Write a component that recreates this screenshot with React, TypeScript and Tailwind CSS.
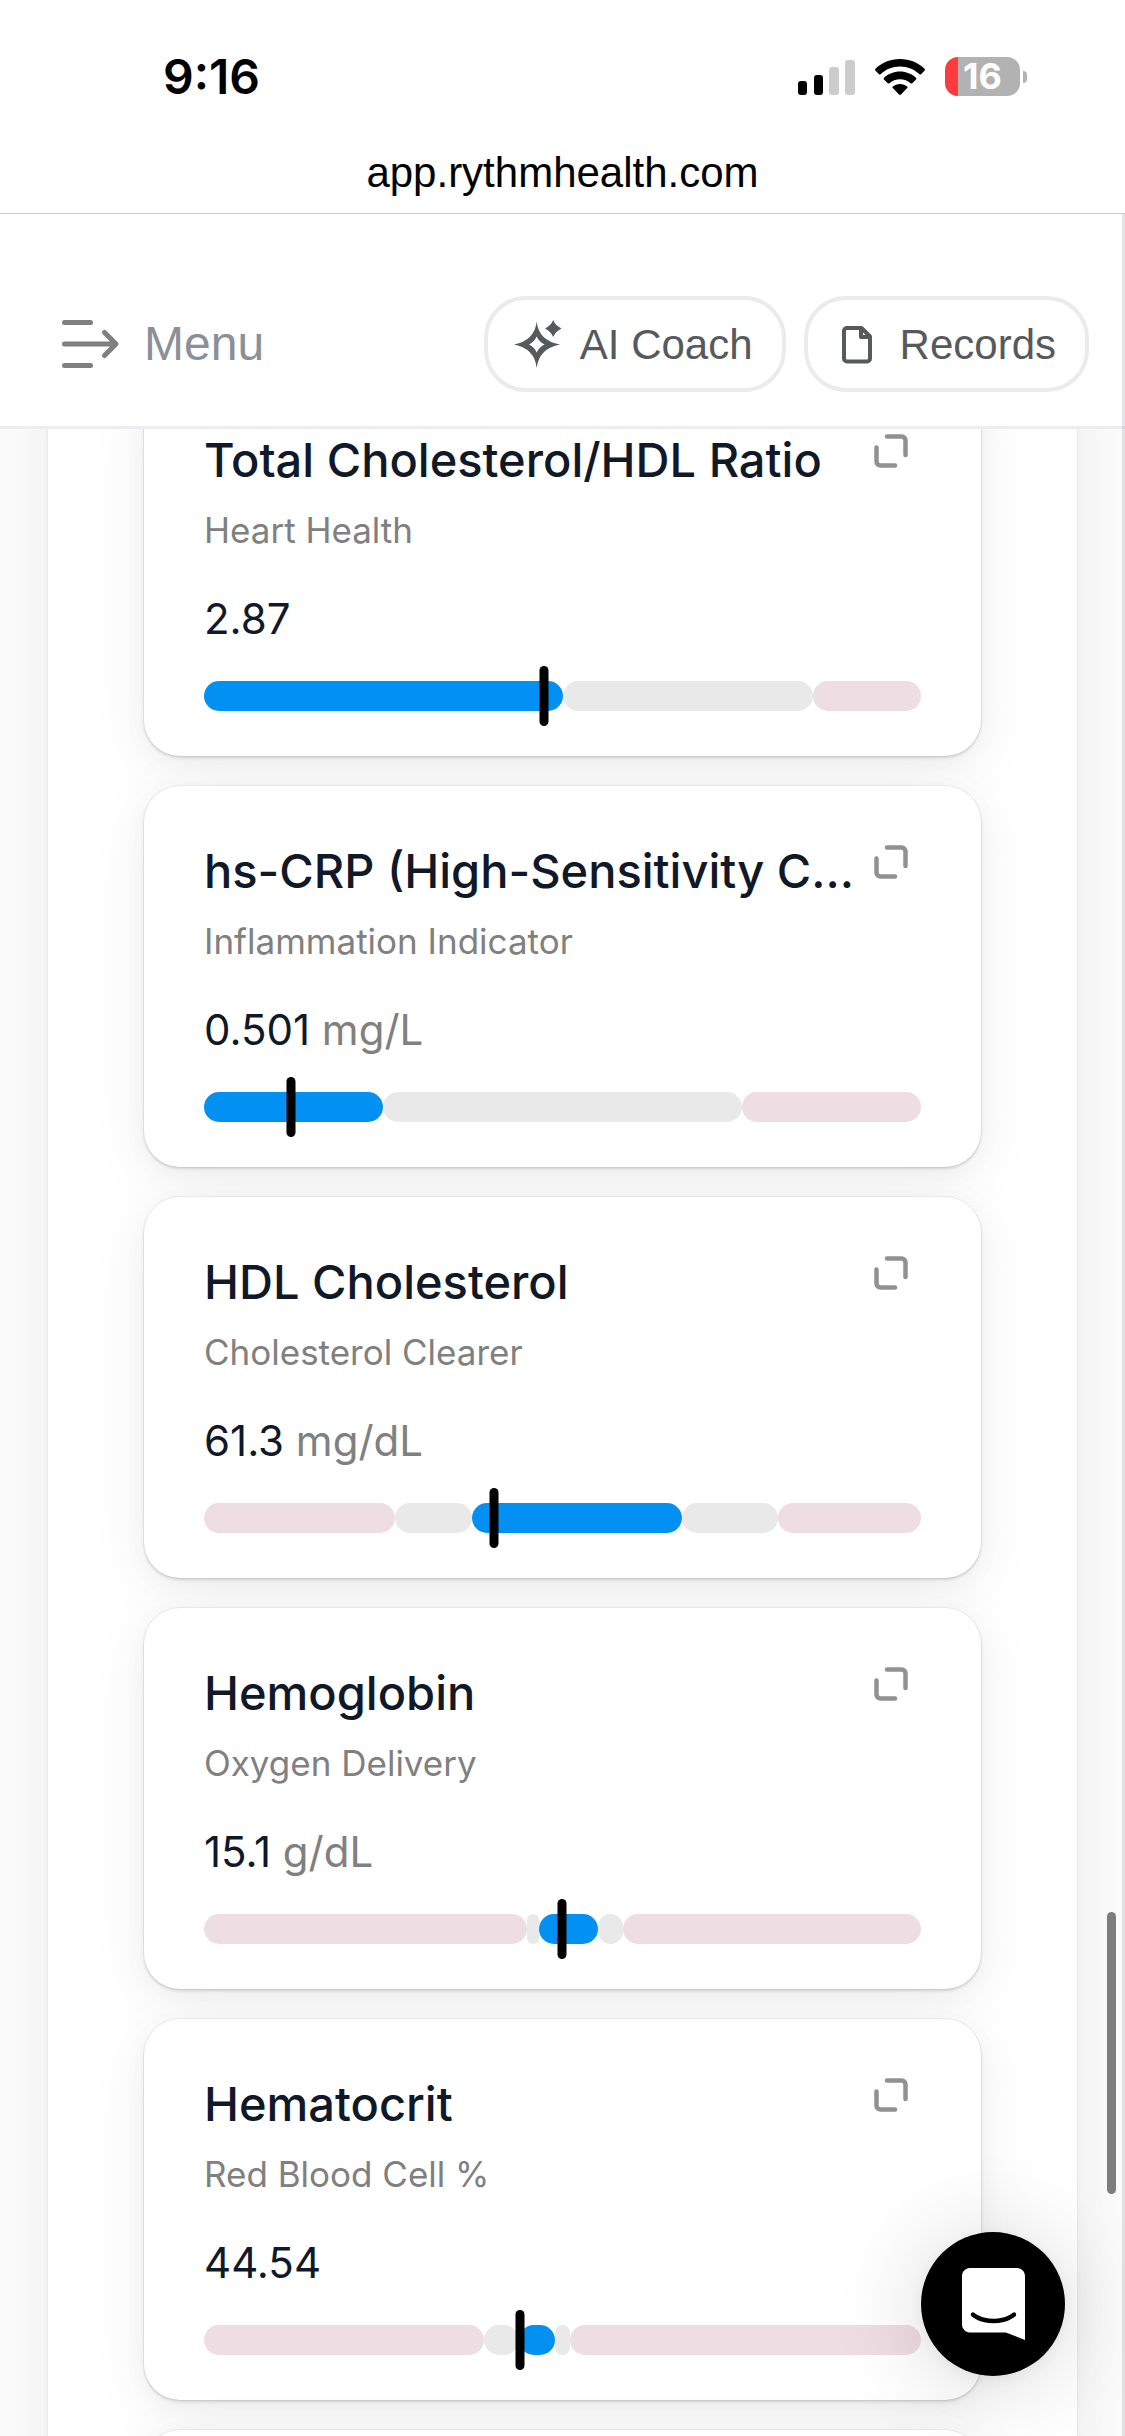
import { useState } from "react";

type Tone = "optimal" | "normal" | "out";

interface Biomarker {
  name: string;
  category: string;
  value: string;
  unit?: string;
  marker: number;
  segments: { tone: Tone; width: number }[];
}

const BIOMARKERS: Biomarker[] = [
  {
    name: "Total Cholesterol/HDL Ratio",
    category: "Heart Health",
    value: "2.87",
    marker: 47.4,
    segments: [
      { tone: "optimal", width: 50 },
      { tone: "normal", width: 35 },
      { tone: "out", width: 15 },
    ],
  },
  {
    name: "hs-CRP (High-Sensitivity C-Reactive Protein)",
    category: "Inflammation Indicator",
    value: "0.501",
    unit: "mg/L",
    marker: 12.1,
    segments: [
      { tone: "optimal", width: 25 },
      { tone: "normal", width: 50 },
      { tone: "out", width: 25 },
    ],
  },
  {
    name: "HDL Cholesterol",
    category: "Cholesterol Clearer",
    value: "61.3",
    unit: "mg/dL",
    marker: 40.4,
    segments: [
      { tone: "out", width: 26.7 },
      { tone: "normal", width: 10.7 },
      { tone: "optimal", width: 29.3 },
      { tone: "normal", width: 13.3 },
      { tone: "out", width: 20 },
    ],
  },
  {
    name: "Hemoglobin",
    category: "Oxygen Delivery",
    value: "15.1",
    unit: "g/dL",
    marker: 49.9,
    segments: [
      { tone: "out", width: 45 },
      { tone: "normal", width: 1.7 },
      { tone: "optimal", width: 8.3 },
      { tone: "normal", width: 3.4 },
      { tone: "out", width: 41.6 },
    ],
  },
  {
    name: "Hematocrit",
    category: "Red Blood Cell %",
    value: "44.54",
    marker: 44.1,
    segments: [
      { tone: "out", width: 39.1 },
      { tone: "normal", width: 4.9 },
      { tone: "optimal", width: 5 },
      { tone: "normal", width: 2.1 },
      { tone: "out", width: 48.9 },
    ],
  },
];

const TONE_CLASS: Record<Tone, string> = {
  optimal: "bg-[#0390f3]",
  normal: "bg-[#e9e9e9]",
  out: "bg-[#eedde2]",
};

const CARD_CLASS =
  "rounded-[36px] bg-white shadow-[0_0_0_1px_rgba(0,0,0,0.05),0_2px_3px_rgba(0,0,0,0.12),0_6px_24px_rgba(0,0,0,0.04),0_12px_66px_rgba(0,0,0,0.06)]";

function SignalIcon() {
  return (
    <svg viewBox="0 0 57 36" className="h-9 w-[57px]" aria-hidden="true">
      <rect x="0" y="22" width="9" height="14" rx="3" fill="#000" />
      <rect x="16" y="16" width="9" height="20" rx="3" fill="#000" />
      <rect x="31" y="8" width="10" height="28" rx="3" fill="#ccc" />
      <rect x="47" y="1" width="10" height="35" rx="3" fill="#ccc" />
    </svg>
  );
}

function WifiIcon() {
  return (
    <svg viewBox="0 0 50 36" className="h-9 w-[50px]" aria-hidden="true">
      <path d="M25 0C34.6 0 43.4 3.7 49.5 9.7c.6.6.6 1.300.1 1.900l-3.500 3.600c-.5.500-1.200.5-1.700 0C39.300 10.400 32.500 7.600 25 7.600S10.700 10.400 5.600 15.200c-.5.500-1.200.5-1.700 0L.4 11.600c-.5-.6-.5-1.300.1-1.900C6.600 3.700 15.400 0 25 0z" />
      <path d="M25 12.600c6.100 0 11.700 2.300 15.900 6.100.6.500.6 1.300.1 1.800l-3.700 3.700c-.5.500-1.100.500-1.700.1C32.700 21.800 29 20.300 25 20.300s-7.700 1.500-10.600 4c-.6.400-1.200.4-1.700-.1L9 20.500c-.5-.5-.5-1.300.1-1.800C13.300 14.900 18.900 12.600 25 12.600z" />
      <path d="M25 24.900c2.700 0 5.200.9 7.100 2.500.6.500.6 1.200.1 1.700l-6.200 6.400c-.6.600-1.400.6-2 0l-6.200-6.400c-.5-.5-.5-1.200.1-1.700 1.900-1.600 4.400-2.500 7.100-2.500z" />
    </svg>
  );
}

function MenuIcon() {
  return (
    <svg viewBox="0 0 60 48" className="h-12 w-15" fill="none" stroke="#808080" strokeWidth="5" strokeLinecap="round" strokeLinejoin="round" aria-hidden="true">
      <path d="M4.500 2.500h26M4.500 24h51M4.500 45.500h26M44.500 12.500L56 24 44.500 35.500" />
    </svg>
  );
}

function SparkleIcon() {
  return (
    <svg viewBox="0 0 48 48" className="size-12" fill="#565a5d" aria-hidden="true">
      <path
        fillRule="evenodd"
        d="M22.700 1.500Q24.500 20.500 46 24.500Q25 28.500 22.700 48Q20.500 28.500 0 24.500Q20.500 20.500 22.700 1.500zM22.700 16.500Q20.300 22 15 24.500Q20.300 27 22.700 32.500Q25.200 27 30.500 24.500Q25.200 22 22.700 16.500z"
      />
      <path d="M39.200 0Q41.300 5.500 47.500 8.500Q41.300 11.500 39.200 17Q37 11.500 31 8.500Q37 5.500 39.200 0z" />
    </svg>
  );
}

function FileIcon() {
  return (
    <svg viewBox="0 0 48 48" className="size-12" fill="none" stroke="#565a5d" strokeWidth="4" strokeLinejoin="round" aria-hidden="true">
      <path d="M13 8h14.500l8.500 8.500V38.500a3 3 0 0 1-3 3H13a3 3 0 0 1-3-3V11a3 3 0 0 1 3-3z" />
      <path d="M27 8v9h9" />
    </svg>
  );
}

function ExpandIcon() {
  return (
    <svg viewBox="0 0 36 36" className="size-9" fill="none" stroke="#919191" strokeWidth="4.500" strokeLinecap="round" aria-hidden="true">
      <path d="M14 3.500h14.500a4 4 0 0 1 4 4V22M3.500 14.500V28.500a4 4 0 0 0 4 4H22" />
    </svg>
  );
}

function StatusBar() {
  return (
    <div className="flex h-[141px] items-center justify-between pt-3 pr-[98px] pl-[163px]">
      <span className="text-[48px] leading-[60px] font-semibold text-black">9:16</span>
      <div className="flex items-center gap-5">
        <SignalIcon />
        <WifiIcon />
        <div className="flex items-center gap-[3px]">
          <div className="flex h-[39px] w-[75px] items-center justify-center rounded-[13px] bg-linear-to-r from-[#ff3b3f] from-[18%] to-[#b2b2b2] to-[18%] text-[36px] leading-[39px] font-bold text-white">
            16
          </div>
          <div className="h-3 w-1 rounded-r-full bg-[#b2b2b2]" />
        </div>
      </div>
    </div>
  );
}

function RangeBar({ marker, segments }: Pick<Biomarker, "marker" | "segments">) {
  return (
    <div className="relative flex h-[30px]">
      {segments.map((seg, i) => (
        <div key={i} className={`h-full rounded-[15px] ${TONE_CLASS[seg.tone]}`} style={{ width: `${seg.width}%` }} />
      ))}
      <div
        className="absolute -top-[15px] h-[60px] w-[9px] -translate-x-1/2 rounded-full bg-black"
        style={{ left: `${marker}%` }}
      />
    </div>
  );
}

function BiomarkerCard({ item }: { item: Biomarker }) {
  return (
    <article className={`${CARD_CLASS} px-15 pt-[54px] pb-[45px]`}>
      <div className="flex items-start justify-between pr-3">
        <h2 className="w-[655px] truncate text-[47px] leading-[62px] font-medium text-[#111827]">{item.name}</h2>
        <button type="button" aria-label={`Expand ${item.name}`} className="pt-1">
          <ExpandIcon />
        </button>
      </div>
      <p className="mt-3 text-[35px] leading-[54px] text-[#808080]">{item.category}</p>
      <p className="mt-8 mb-8 text-[42px] leading-[60px] text-[#111827]">
        {item.value}
        {item.unit && <span className="text-[#808080]"> {item.unit}</span>}
      </p>
      <RangeBar marker={item.marker} segments={item.segments} />
    </article>
  );
}

export default function App() {
  const [chatOpen, setChatOpen] = useState(false);

  return (
    <div className="flex h-screen flex-col overflow-hidden bg-[#fcfcfc] font-['Inter','Liberation_Sans',sans-serif]">
      <div className="relative z-10 bg-white">
        <StatusBar />
        <div className="h-[73px] border-b border-[#c8c8c8] text-center font-['Liberation_Sans',sans-serif] text-[42px] leading-[64px] text-black">
          app.rythmhealth.com
        </div>
        <header className="flex items-center justify-between border-b-[3px] border-[#ebedf0] pt-[82px] pr-9 pb-[34px] pl-[60px] font-['Liberation_Sans',sans-serif]">
          <button type="button" className="flex items-center gap-6 text-[48px] leading-[60px] text-[#8a8f98]">
            <MenuIcon />
            Menu
          </button>
          <div className="flex gap-[18px]">
            <button type="button" className="flex h-24 items-center gap-[18px] rounded-[42px] border-4 border-[#ebebeb] pr-[29px] pl-[26px] text-[42px] text-[#565a5d]">
              <SparkleIcon />
              AI Coach
            </button>
            <button type="button" className="flex h-24 items-center gap-[18px] rounded-[42px] border-4 border-[#ebebeb] pr-[29px] pl-[26px] text-[42px] text-[#565a5d]">
              <FileIcon />
              Records
            </button>
          </div>
        </header>
      </div>

      {/* List is scrolled, first card sits partly under the header */}
      <main className="min-h-0 flex-1 px-12">
        <div className="-mt-[54px] space-y-[30px] bg-white px-24 shadow-[0_0_3px_rgba(0,0,0,0.1),0_0_60px_rgba(0,0,0,0.07)]">
          {BIOMARKERS.map((item) => (
            <BiomarkerCard key={item.name} item={item} />
          ))}
          <div className={`${CARD_CLASS} h-96`} />
        </div>
      </main>

      <div className="fixed top-[214px] right-0 bottom-0 z-20 w-[3px] bg-black/10" />
      <div className="fixed top-[1912px] right-[9px] z-20 h-[282px] w-[9px] rounded-full bg-[#7d7d7d]" />

      <button
        type="button"
        aria-label="Open chat"
        aria-expanded={chatOpen}
        onClick={() => setChatOpen((prev) => !prev)}
        className="fixed right-15 bottom-15 z-10 flex size-36 items-center justify-center rounded-full bg-black shadow-[0_3px_18px_rgba(0,0,0,0.06),0_6px_96px_rgba(0,0,0,0.16)]"
      >
        <svg viewBox="0 0 28 32" className="h-18 w-[63px]" fill="#fff" aria-hidden="true">
          <path d="M28 32s-4.714-1.855-8.527-3.340H3.437C1.540 28.660 0 27.026 0 25.013V3.644C0 1.633 1.540 0 3.437 0h21.125c1.898 0 3.437 1.632 3.437 3.645v18.404H28V32zm-4.139-11.982a.88.88 0 0 0-1.292-.105c-.03.026-3.015 2.681-8.570 2.681-5.486 0-8.517-2.636-8.571-2.684a.88.88 0 0 0-1.290.107 1.010 1.010 0 0 0-.219.708.992.992 0 0 0 .318.664c.142.128 3.537 3.150 9.762 3.150 6.226 0 9.621-3.022 9.763-3.150a.992.992 0 0 0 .317-.664 1.010 1.010 0 0 0-.218-.707z" />
        </svg>
      </button>
    </div>
  );
}
